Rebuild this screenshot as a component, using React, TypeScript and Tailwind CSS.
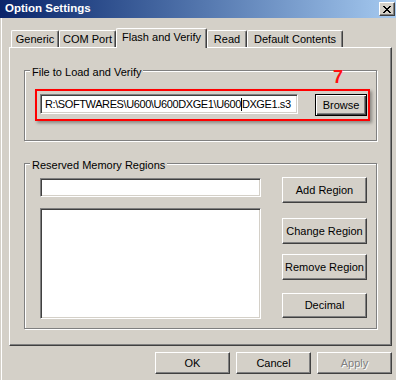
import React from "react";

const raised =
  "bg-[#d4d0c8] border border-t-white border-l-white border-r-[#404040] border-b-[#404040] shadow-[inset_-1px_-1px_0_#808080] flex items-center justify-center whitespace-nowrap";

const sunken =
  "bg-white border border-t-[#808080] border-l-[#808080] border-r-white border-b-white shadow-[inset_1px_1px_0_#404040,inset_-1px_-1px_0_#d4d0c8]";

function GroupBox({
  label,
  className,
  children,
}: {
  label: string;
  className: string;
  children?: React.ReactNode;
}) {
  return (
    <div
      className={`relative border border-[#808080] shadow-[inset_1px_1px_0_#ffffff,1px_1px_0_#ffffff] ${className}`}
    >
      <span className="absolute left-[5px] top-[-5px] px-[2px] bg-[#d4d0c8] leading-[13px] whitespace-nowrap">
        {label}
      </span>
      {children}
    </div>
  );
}

function Tab({ label, w, selected }: { label: string; w: string; selected?: boolean }) {
  if (selected) {
    return (
      <div
        className={`${w} h-[20px] -mb-px relative z-10 bg-[#d4d0c8] border-t border-l border-r border-t-white border-l-white border-r-[#404040] shadow-[inset_-1px_0_0_#808080] rounded-tl-[2px] rounded-tr-[2px] flex items-start justify-center pt-[2px] leading-[13px] whitespace-nowrap`}
      >
        {label}
      </div>
    );
  }
  return (
    <div
      className={`${w} h-[17px] bg-[#d4d0c8] border-t border-l border-r border-t-white border-l-white border-r-[#404040] shadow-[inset_-1px_0_0_#808080] rounded-tl-[2px] rounded-tr-[2px] flex items-start justify-center pt-[2px] leading-[13px] whitespace-nowrap`}
    >
      {label}
    </div>
  );
}

export default function App() {
  return (
    <div className="w-[396px] h-[380px] bg-[#d4d0c8] overflow-hidden font-['Liberation_Sans',Arial,sans-serif] text-[11px] text-black flex flex-col">
      {/* Title bar */}
      <div className="h-[18px] shrink-0 flex items-center justify-between bg-linear-to-r from-[#0a246a] to-[#a6caf0] pl-[5px] pr-[1px]">
        <span className="text-white font-bold text-[11.5px] leading-none">Option Settings</span>
        <div className="w-[16px] h-[14px] bg-[#d4d0c8] border border-t-white border-l-white border-r-[#404040] border-b-[#404040] shadow-[inset_-1px_-1px_0_#808080] flex items-center justify-center">
          <svg width="8" height="7" viewBox="0 0 8 7" shapeRendering="crispEdges">
            <path
              fill="#000"
              d="M0 0h2v1H0zM6 0h2v1H6zM1 1h2v1H1zM5 1h2v1H5zM2 2h4v1H2zM3 3h2v1H3zM2 4h4v1H2zM1 5h2v1H1zM5 5h2v1H5zM0 6h2v1H0zM6 6h2v1H6z"
            />
          </svg>
        </div>
      </div>

      {/* Body */}
      <div className="flex-1 ml-px border-l border-white flex flex-col">
        {/* Tabs */}
        <div className="mt-[10px] ml-[9px] h-[19px] flex items-end">
          <Tab label="Generic" w="w-[48px]" />
          <Tab label="COM Port" w="w-[57px]" />
          <Tab label="Flash and Verify" w="w-[91px]" selected />
          <Tab label="Read" w="w-[40px]" />
          <Tab label="Default Contents" w="w-[96px]" />
        </div>

        {/* Tab panel */}
        <div className="ml-[7px] w-[383px] h-[299px] border border-t-white border-l-white border-r-[#404040] border-b-[#404040] shadow-[inset_-1px_-1px_0_#808080] flex flex-col">
          <GroupBox label="File to Load and Verify" className="ml-[14px] mt-[22px] w-[353px] h-[71px]">
            <div className="pl-[15px] pt-[23px] flex items-start">
              <div
                className={`${sunken} w-[258px] h-[20px] flex items-center pl-[4px] overflow-hidden whitespace-nowrap tracking-[-0.4px]`}
              >
                <span>{"R:\\SOFTWARES\\U600\\U600DXGE1\\U600"}</span>
                <span className="inline-block w-px h-[13px] bg-black" />
                <span>{"DXGE1.s3"}</span>
              </div>
              <div className="ml-[17px] w-[52px] h-[22px] bg-[#d4d0c8] border border-black shadow-[inset_1px_1px_0_#ffffff,inset_-1px_-1px_0_#404040,inset_-2px_-2px_0_#808080] flex items-center justify-center">
                Browse
              </div>
            </div>
            {/* annotation overlay */}
            <div className="absolute left-[10px] top-[18px] w-[335px] h-[32px] border-2 border-[#ff0000] shadow-[2px_2px_3px_rgba(0,0,0,0.35)] pointer-events-none" />
            <span className="absolute left-[308px] top-[-3px] text-[18px] leading-none font-bold text-[#ff1010]">
              7
            </span>
          </GroupBox>

          <GroupBox label="Reserved Memory Regions" className="ml-[14px] mt-[22px] w-[353px] h-[166px]">
            <div className="pl-[15px] pt-[13px] flex items-start">
              <div className="mt-px flex flex-col">
                <div className={`${sunken} w-[221px] h-[19px]`} />
                <div className={`${sunken} mt-[11px] w-[221px] h-[111px]`} />
              </div>
              <div className="ml-[21px] w-[85px] flex flex-col">
                <div className={`${raised} h-[26px]`}>Add Region</div>
                <div className={`${raised} mt-[15px] h-[26px]`}>Change Region</div>
                <div className={`${raised} mt-[10px] h-[26px]`}>Remove Region</div>
                <div className={`${raised} mt-[13px] h-[25px]`}>Decimal</div>
              </div>
            </div>
          </GroupBox>
        </div>

        {/* Dialog buttons */}
        <div className="mt-[6px] pr-[4px] flex justify-end gap-[6px]">
          <div className={`${raised} w-[75px] h-[22px]`}>OK</div>
          <div className={`${raised} w-[75px] h-[22px]`}>Cancel</div>
          <div className={`${raised} w-[75px] h-[22px] text-[#808080] [text-shadow:1px_1px_0_#ffffff]`}>
            Apply
          </div>
        </div>
      </div>
    </div>
  );
}
